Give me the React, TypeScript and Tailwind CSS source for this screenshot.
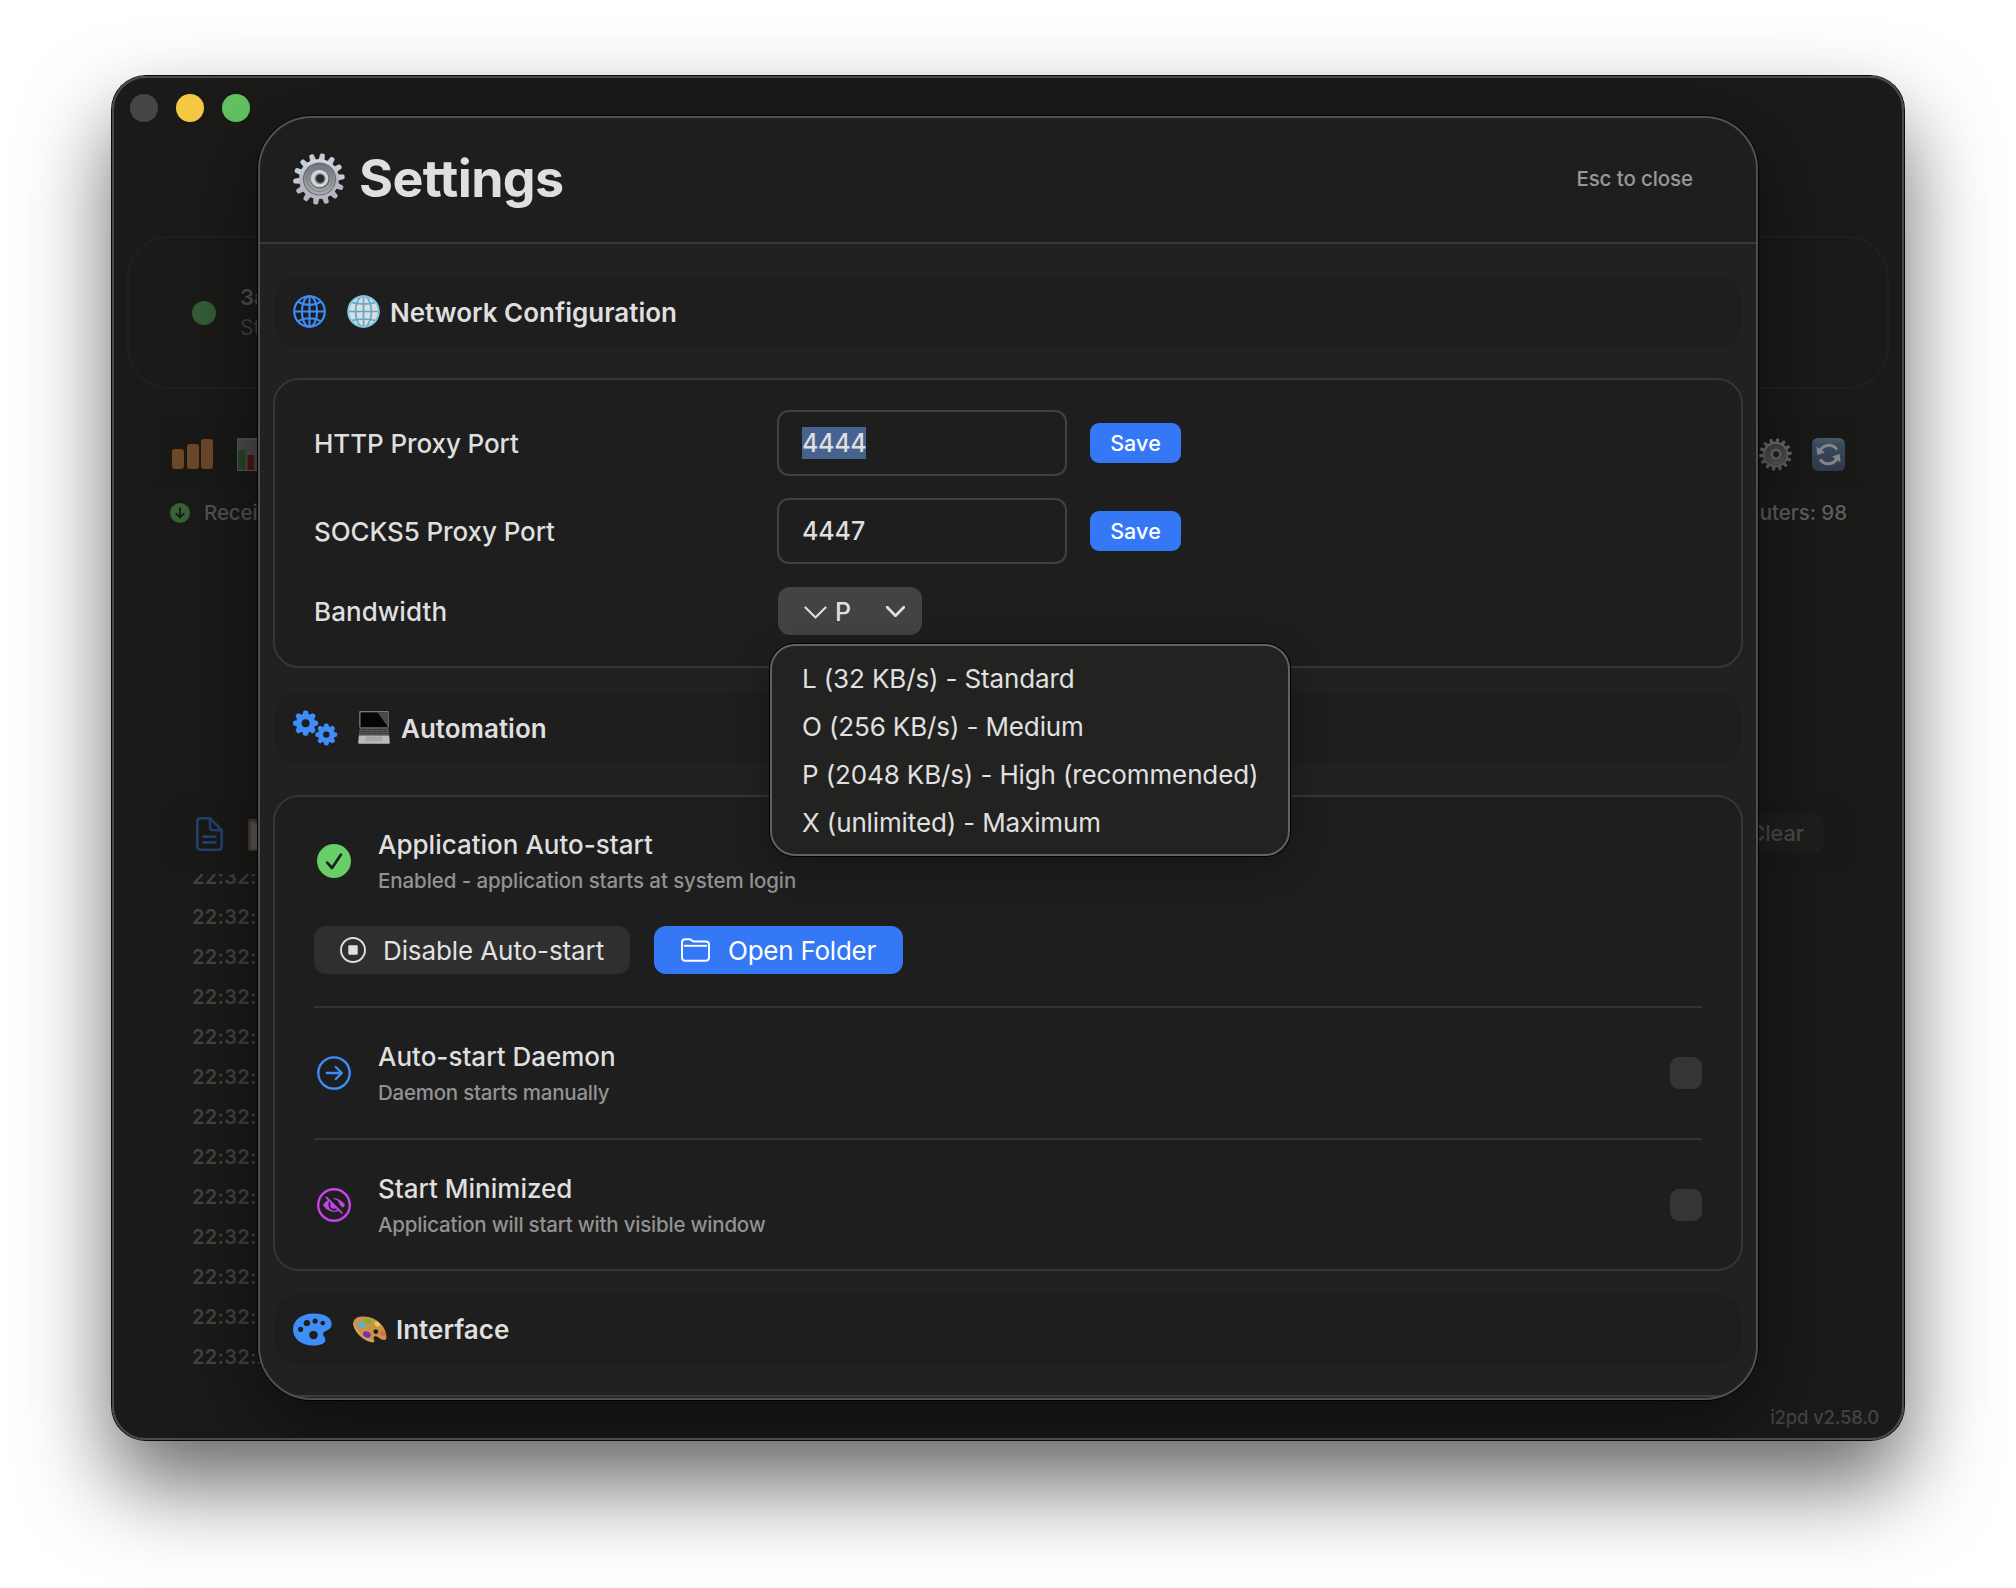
import React from "react";

type IconProps = { className?: string };

const GEAR_TEETH = Array.from({ length: 14 }, (_, i) => (i * 360) / 14 + 8);
const LOG_ROWS = Array.from({ length: 13 }, (_, i) => i);

function SilverGear({ className }: IconProps) {
  return (
    <svg viewBox="0 0 52 52" className={className}>
      <defs>
        <linearGradient id="gearMetal" x1="0" y1="0" x2="0" y2="1">
          <stop offset="0" stopColor="#d3dee6" />
          <stop offset="0.5" stopColor="#b3b6bc" />
          <stop offset="1" stopColor="#b9b6c2" />
        </linearGradient>
        <linearGradient id="gearDish" x1="0" y1="0" x2="0" y2="1">
          <stop offset="0" stopColor="#6e7276" />
          <stop offset="1" stopColor="#a9acb1" />
        </linearGradient>
      </defs>
      {GEAR_TEETH.map((a) => (
        <path
          key={a}
          d="M22.8 9 L23.6 1.6 Q23.8 0.4 25 0.3 H27 Q28.2 0.4 28.4 1.6 L29.2 9Z"
          fill={a > 110 && a < 250 ? "#b7b4be" : "#c3cdd5"}
          transform={`rotate(${a} 26 26)`}
        />
      ))}
      <circle cx="26" cy="26" r="20" fill="url(#gearMetal)" />
      <circle cx="26.5" cy="26" r="16.6" fill="#686c70" />
      <circle cx="26.5" cy="26" r="15.6" fill="url(#gearDish)" />
      <circle cx="26.5" cy="26" r="12.6" fill="none" stroke="#7d8186" strokeWidth="1" />
      <circle cx="27" cy="26" r="9.6" fill="#5f6266" />
      <circle cx="26.6" cy="25.5" r="8.8" fill="#d0d5db" />
      <circle cx="27" cy="25.6" r="5.4" fill="#7c8187" />
      <circle cx="27.2" cy="25.6" r="4.2" fill="#2c2a27" />
    </svg>
  );
}

function GlobeLine({ className }: IconProps) {
  return (
    <svg viewBox="0 0 33 33" className={className} fill="none" stroke="#3f8ef8" strokeWidth="2.1">
      <circle cx="16.5" cy="16.5" r="15.3" />
      <ellipse cx="16.5" cy="16.5" rx="7.6" ry="15.3" />
      <path d="M16.5 1.2V31.8M1.2 16.5H31.8M5 6.6Q10 9.8 16.5 9.8T28 6.6M5 26.4Q10 23.2 16.5 23.2T28 26.4" />
    </svg>
  );
}

function GlobeColor({ className }: IconProps) {
  return (
    <svg viewBox="0 0 33 33" className={className} fill="none">
      <circle cx="16.5" cy="16.5" r="15.6" fill="#dcdddd" />
      <g stroke="#5fa9c8" strokeWidth="1.7">
        <ellipse cx="16.5" cy="16.5" rx="8" ry="15.3" />
        <path d="M16.5 1V32M1 16.5H32M4.5 7.4Q10 9 16.5 9T28.5 7.4M4.5 25.6Q10 24 16.5 24T28.5 25.6" />
      </g>
      <circle cx="16.5" cy="16.5" r="15.3" stroke="#7fc6df" strokeWidth="2" />
    </svg>
  );
}

const gearPath = (cx: number, cy: number, outer: number, body: number, hole: number) => (
  <g>
    {[0, 45, 90, 135, 180, 225, 270, 315].map((a) => (
      <rect
        key={a}
        x={cx - outer * 0.22}
        y={cy - outer}
        width={outer * 0.44}
        height={outer * 0.6}
        rx={outer * 0.19}
        fill="#3f8ef8"
        transform={`rotate(${a} ${cx} ${cy})`}
      />
    ))}
    <circle cx={cx} cy={cy} r={(body + hole) / 2} fill="none" stroke="#3f8ef8" strokeWidth={body - hole} />
  </g>
);

function TwoGears({ className }: IconProps) {
  return (
    <svg viewBox="0 0 45 36" className={className}>
      {gearPath(12.6, 13.2, 12.6, 9.8, 4)}
      {gearPath(33.3, 24.6, 11, 8.5, 3.2)}
    </svg>
  );
}

function Laptop({ className }: IconProps) {
  return (
    <svg viewBox="0 0 94 98" className={className}>
      <rect x="3" y="0" width="88" height="50" rx="3" fill="#77787a" />
      <rect x="7" y="4" width="80" height="44" fill="#060606" />
      <path d="M57 4H87V45Z" fill="#4b4b4c" />
      <path d="M5 50H89L92 73H2Z" fill="#58595b" />
      <path d="M8 55H86M7 61H87M6 67H88" stroke="#2d2d2e" strokeWidth="3" strokeDasharray="5 2" />
      <path d="M2 73H92L94 94Q94 97 91 97H3Q0 97 0 94Z" fill="#b9babb" />
      <path d="M24 76H70L73 90H21Z" fill="#a5a6a7" />
    </svg>
  );
}

function PaletteSolid({ className }: IconProps) {
  return (
    <svg viewBox="38 67 118 99" className={className}>
      <path
        fillRule="evenodd"
        fill="#3f8ef8"
        d="M101 68C132 68 155 80 155 99C155 120 132 118 129 129C128 136 137 139 136 149C135 160 119 165 99 165C62 165 38 145 38 116C38 86 66 68 101 68ZM61 108a8 8 0 1 0 .01 0ZM80 87a10 10 0 1 0 .01 0ZM105 83a8 8 0 1 0 .01 0ZM128 90a7 7 0 1 0 .01 0ZM100 120a13 13 0 1 0 .01 0Z"
      />
    </svg>
  );
}

function PaletteColor({ className }: IconProps) {
  return (
    <svg viewBox="219 80 101 80" className={className}>
      <path
        fillRule="evenodd"
        fill="#cb9349"
        d="M221 95C228 78 262 78 286 91C306 102 320 125 318 146C317 152 310 153 303 149C297 146 291 139 284 140C277 142 282 150 283 156C278 161 260 156 244 143C228 130 217 112 221 95ZM287 119a7 7 0 1 0 .01 0Z"
      />
      <path d="M221 100C222 120 245 145 280 157" fill="none" stroke="#e0b069" strokeWidth="3" />
      <ellipse cx="244" cy="106" rx="12" ry="8" fill="#52b5da" transform="rotate(30 244 106)" />
      <ellipse cx="264" cy="95" rx="9" ry="7" fill="#5fbf33" transform="rotate(30 264 95)" />
      <ellipse cx="291" cy="104" rx="9" ry="6" fill="#e9cf45" transform="rotate(40 291 104)" />
      <ellipse cx="307" cy="132" rx="9" ry="6" fill="#e0664f" transform="rotate(50 307 132)" />
      <ellipse cx="260" cy="135" rx="12" ry="9" fill="#7d2fae" transform="rotate(20 260 135)" />
    </svg>
  );
}

function CheckCircle({ className }: IconProps) {
  return (
    <svg viewBox="0 0 34 34" className={className}>
      <circle cx="17" cy="17" r="17" fill="#68ce67" />
      <path d="M10.2 18.6L15 24L24 10.6" fill="none" stroke="#1e1e1e" strokeWidth="2.7" strokeLinecap="round" strokeLinejoin="round" />
    </svg>
  );
}

function ArrowCircle({ className }: IconProps) {
  return (
    <svg viewBox="0 0 34 34" className={className} fill="none" stroke="#3f8ef8" strokeWidth="2.3" strokeLinecap="round" strokeLinejoin="round">
      <circle cx="17" cy="17" r="15.7" />
      <path d="M9.8 17H24.6M18.8 11L24.8 17L18.8 23" />
    </svg>
  );
}

function HiddenCircle({ className }: IconProps) {
  return (
    <svg viewBox="0 0 34 34" className={className} fill="none">
      <circle cx="17" cy="17" r="15.8" stroke="#c843ea" strokeWidth="2.4" />
      <path d="M6 17C9 12.4 13 10.2 17 10.2S25 12.4 28 17C25 21.6 21 23.8 17 23.8S9 21.6 6 17Z" fill="#c843ea" />
      <circle cx="17" cy="17" r="4.7" stroke="#1e1e1e" strokeWidth="1.9" fill="#c843ea" />
      <path d="M10.2 7.6L26.6 24" stroke="#1e1e1e" strokeWidth="4.6" />
      <path d="M9.4 9.4L24.8 24.8" stroke="#c843ea" strokeWidth="1.9" strokeLinecap="round" />
    </svg>
  );
}

function StopCircle({ className }: IconProps) {
  return (
    <svg viewBox="0 0 26 26" className={className}>
      <circle cx="13" cy="13" r="12" fill="none" stroke="#e0e0e0" strokeWidth="1.9" />
      <rect x="8.3" y="8.3" width="9.4" height="9.4" rx="1.2" fill="#e0e0e0" />
    </svg>
  );
}

function FolderLine({ className }: IconProps) {
  return (
    <svg viewBox="0 0 29 24" className={className} fill="none" stroke="#ffffff" strokeWidth="1.9" strokeLinejoin="round">
      <path d="M1 4.4Q1 1.2 4.2 1.2H8.2Q9.6 1.2 10.6 2.2L11.2 2.8Q12 3.5 13.2 3.5H24.8Q28 3.5 28 6.7V19.6Q28 22.8 24.8 22.8H4.2Q1 22.8 1 19.6Z" />
      <path d="M3 7.8H26" />
    </svg>
  );
}

function BarChartEmoji({ className }: IconProps) {
  return (
    <svg viewBox="0 0 33 33" className={className}>
      <rect width="33" height="33" fill="#55575a" />
      <rect x="1.5" y="1.5" width="30" height="30" fill="#4b4c4f" />
      <rect x="1.4" y="12" width="7" height="20" fill="#27481f" />
      <rect x="10.6" y="17" width="6.6" height="15" fill="#4b1815" />
      <rect x="20" y="5" width="7" height="27" fill="#1c3a5c" />
    </svg>
  );
}

function RefreshEmoji({ className }: IconProps) {
  return (
    <svg viewBox="0 0 33 33" className={className}>
      <defs>
        <linearGradient id="refreshTile" x1="0" y1="0" x2="0" y2="1">
          <stop offset="0" stopColor="#4d5b6c" />
          <stop offset="0.2" stopColor="#3a4a5d" />
          <stop offset="1" stopColor="#2f3b4b" />
        </linearGradient>
      </defs>
      <rect width="33" height="33" rx="6" fill="url(#refreshTile)" />
      <g fill="none" stroke="#85878a" strokeWidth="3">
        <path d="M7.6 14.2C9.6 6.6 20 4.6 25 11.6" />
        <path d="M25.4 18.8C23.4 26.4 13 28.4 8 21.4" />
      </g>
      <path d="M4.4 8.6L5.2 17L13 14.6Z" fill="#85878a" />
      <path d="M28.6 24.4L27.8 16L20 18.4Z" transform="rotate(0 24 20)" fill="#85878a" />
    </svg>
  );
}

function DocIcon({ className }: IconProps) {
  return (
    <svg viewBox="0 0 27 34" className={className} fill="none" stroke="#23426f" strokeWidth="2.6" strokeLinejoin="round" strokeLinecap="round">
      <path d="M4.4 1.3H14L25.6 13V29.4Q25.6 32.7 22.4 32.7H4.6Q1.3 32.7 1.3 29.4V4.4Q1.3 1.3 4.4 1.3Z" />
      <path d="M14 1.5V10.4Q14 13.2 16.8 13.2H25.4M7.4 19.6H19.4M7.4 25.4H19.4" />
    </svg>
  );
}

function ClipboardEmoji({ className }: IconProps) {
  return (
    <svg viewBox="0 0 26 32" className={className}>
      <rect width="26" height="32" rx="2" fill="#4b3b2a" />
      <rect x="2.4" y="3" width="21" height="27" fill="#5a5a59" />
      <rect x="7" y="0" width="12" height="5" rx="1.5" fill="#3b3c3d" />
    </svg>
  );
}

function ChevronDown({ className, width }: { className?: string; width: number }) {
  return (
    <svg viewBox="0 0 22 12" preserveAspectRatio="none" className={className} fill="none" stroke="#e0e0e0" strokeWidth={width} strokeLinecap="round" strokeLinejoin="round">
      <path d="M1.4 1.4L11 10.6L20.6 1.4" />
    </svg>
  );
}

function DownloadDot({ className }: IconProps) {
  return (
    <svg viewBox="0 0 20 20" className={className}>
      <circle cx="10" cy="10" r="10" fill="#376337" />
      <path d="M10 5V14.2M6.2 10.6L10 14.4L13.8 10.6" fill="none" stroke="#181817" strokeWidth="1.7" strokeLinecap="round" strokeLinejoin="round" />
    </svg>
  );
}

/* Main window content, dimmed while the settings sheet is open */
function Backdrop() {
  return (
    <div className="flex h-full flex-col">
      <div className="flex h-[160px] items-start gap-[18px] pt-[18px] pl-[18px]">
        <span className="size-7 rounded-full bg-[#464543]" />
        <span className="size-7 rounded-full bg-[#f5c944]" />
        <span className="size-7 rounded-full bg-[#62c463]" />
      </div>

      <div className="mx-[15px] flex h-[153px] items-center gap-6 rounded-[42px] border-2 border-[#20201f] pl-[63px]">
        <span className="size-6 rounded-full bg-[#355d34]" />
        <div className="flex flex-col">
          <span className="text-[22px] leading-[30px] font-semibold text-[#50504f]">Запущен</span>
          <span className="pt-px text-[21px] leading-[30px] text-[#414140]">Status</span>
        </div>
      </div>

      <div className="mx-[15px] mt-[31px] flex h-[68px] items-center rounded-[32px] bg-[#191918] pr-[44px] pl-[45px]">
        <div className="flex items-end gap-[2.5px]">
          <span className="h-5 w-3 rounded-[3px] bg-[#6d4829]" />
          <span className="h-[25px] w-3 rounded-[3px] bg-[#6d4829]" />
          <span className="h-[30px] w-3 rounded-[3px] bg-[#6d4829]" />
        </div>
        <BarChartEmoji className="ml-6 size-[33px]" />
        <div className="ml-auto flex items-center gap-5">
          <SilverGear className="size-[33px] opacity-45" />
          <RefreshEmoji className="size-[33px]" />
        </div>
      </div>

      <div className="mt-[11px] flex h-7 items-center pr-[57px] pl-[58px] text-[20.5px] font-medium">
        <DownloadDot className="size-5" />
        <span className="ml-[14px] pt-px tracking-[-0.1px] text-[#535352]">Received</span>
        <span className="ml-auto pt-px tracking-[-0.05px] text-[#5f5f5e]">Routers: 98</span>
      </div>

      <div className="mx-[42px] mt-[272px] flex h-[70px] items-center rounded-[32px] bg-[#191918] pr-[38px] pl-[42px]">
        <DocIcon className="h-[34px] w-[27px]" />
        <ClipboardEmoji className="mt-0.5 ml-[25px] h-8 w-[26px]" />
        <span className="-mt-0.5 ml-auto flex h-10 w-[112px] items-center justify-end rounded-[10px] bg-[#1e1e1d] pr-[20px] text-[21.5px] font-medium text-[#4b4b4a]">
          Clear
        </span>
      </div>

      <div className="mt-[5px] flex h-[503px] flex-col justify-end overflow-hidden pl-[80px]">
        {LOG_ROWS.map((i) => (
          <span key={i} className="h-10 shrink-0 text-[20px] leading-10 font-semibold tracking-[0.3px] text-[#444443]">
            22:32:21
          </span>
        ))}
      </div>
      <div className="mt-auto flex justify-end pr-[25px] pb-[10px] text-[18.5px] leading-[26px] font-medium tracking-[-0.18px] text-[#434342]">
        i2pd v2.58.0
      </div>
    </div>
  );
}

function SectionHeader({ children, className }: { children: React.ReactNode; className: string }) {
  return (
    <div className={`flex h-[71px] shrink-0 items-center rounded-[26px] bg-[#1e1e1e] text-[26px] leading-[34px] font-semibold text-[#dfdfdf] ${className}`}>
      {children}
    </div>
  );
}

function PortRow({ label, value, selected }: { label: string; value: string; selected?: boolean }) {
  return (
    <div className="flex h-[66px] items-center">
      <span className="w-[463px] pt-0.5 text-[26px] leading-[34px] font-medium tracking-[-0.1px]">{label}</span>
      <div className="flex h-[66px] w-[290px] items-center rounded-xl border-2 border-[#414141] pl-[23px]">
        <span className={selected ? "h-8 bg-[#466390] text-[25px] leading-8 font-medium tracking-[-0.3px]" : "h-8 text-[25px] leading-8 font-medium tracking-[-0.1px]"}>
          {value}
        </span>
      </div>
      <button className="ml-[23px] h-10 w-[91px] rounded-[9px] bg-[#3478f6] text-[21.5px] font-medium tracking-[0.1px] text-white">Save</button>
    </div>
  );
}

function TitleBlock({ title, sub, subSpacing }: { title: string; sub: string; subSpacing: string }) {
  return (
    <div className="-mb-px ml-[27px] flex flex-col gap-[5px]">
      <span className="text-[26px] leading-[34px] font-medium">{title}</span>
      <span className={`text-[20.5px] leading-7 font-medium text-[#929292] ${subSpacing}`}>{sub}</span>
    </div>
  );
}

function BandwidthMenu() {
  return (
    <div className="absolute top-[57px] left-[-8px] z-20 flex h-[212px] w-[520px] flex-col rounded-[25px] border-2 border-[#626262] bg-[#222221] pt-[9px] pl-[30px] text-[26px] leading-[48px] font-normal tracking-[-0.13px] text-[#e0e0e0] shadow-[0_0_0_1px_#000,0_10px_36px_rgba(0,0,0,0.32)]">
      <span>L (32 KB/s) - Standard</span>
      <span>O (256 KB/s) - Medium</span>
      <span>P (2048 KB/s) - High (recommended)</span>
      <span>X (unlimited) - Maximum</span>
    </div>
  );
}

function SettingsSheet() {
  return (
    <div className="absolute top-[40px] left-[146px] h-[1284px] w-[1500px] rounded-[54px] shadow-[0_0_0_1px_#000,0_24px_80px_rgba(0,0,0,0.5)]">
      <div className="flex h-full flex-col overflow-hidden rounded-[54px] bg-[#22211f] text-[#dfdfdf]">
        <div className="flex h-32 shrink-0 items-center border-b-2 border-[#3a3938] bg-[#1e1e1e] pr-[65px] pl-[35px]">
          <SilverGear className="size-[52px]" />
          <h1 className="ml-[14px] text-[52px] leading-[60px] font-bold tracking-[-0.65px]">Settings</h1>
          <span className="ml-auto text-[20.5px] font-medium tracking-[-0.1px] text-[#989898]">Esc to close</span>
        </div>

        <div className="flex min-h-0 flex-1 flex-col px-[15px] pt-8">
          <SectionHeader className="mx-px pl-[19px]">
            <GlobeLine className="size-[33px]" />
            <GlobeColor className="ml-[21px] size-[33px]" />
            <span className="mt-0.5 ml-[10px]">Network Configuration</span>
          </SectionHeader>

          <div className="mt-[31px] h-[290px] shrink-0 rounded-[26px] border-2 border-[#373636] bg-[#1e1e1e] pt-[30px] pl-[39px]">
            <PortRow label="HTTP Proxy Port" value="4444" selected />
            <div className="h-[22px]" />
            <PortRow label="SOCKS5 Proxy Port" value="4447" />
            <div className="mt-[23px] flex h-12 items-center">
              <span className="w-[464px] pt-0.5 text-[26px] leading-[34px] font-medium tracking-[0.05px]">Bandwidth</span>
              <div className="relative flex h-12 w-36 items-center rounded-xl bg-[#434343] pl-[26px] text-[25px] font-medium">
                <ChevronDown width={2} className="mt-0.5 h-[13px] w-[23px]" />
                <span className="ml-[8px] pt-0.5 leading-8">P</span>
                <ChevronDown width={3.2} className="mt-px mr-[17px] ml-auto h-[11px] w-[19px]" />
                <BandwidthMenu />
              </div>
            </div>
          </div>

          <SectionHeader className="mx-px mt-6 pl-[19px]">
            <TwoGears className="h-9 w-[45px]" />
            <Laptop className="ml-[20px] h-[33px] w-[32px]" />
            <span className="mt-0.5 ml-[11px]">Automation</span>
          </SectionHeader>

          <div className="mt-8 flex h-[476px] shrink-0 flex-col rounded-[26px] border-2 border-[#373636] bg-[#1e1e1e] pt-[31px] pr-[39px] pl-[39px]">
            <div className="flex h-[66px] items-center pl-[3px]">
              <CheckCircle className="size-[34px]" />
              <TitleBlock title="Application Auto-start" sub="Enabled - application starts at system login" subSpacing="tracking-[-0.09px]" />
            </div>
            <div className="mt-8 flex gap-6 text-[26px] leading-[34px]">
              <button className="flex h-12 w-[316px] items-center rounded-xl bg-[#2f2f2f] pl-[26px] tracking-[-0.1px] text-[#e2e2e2]">
                <StopCircle className="size-[26px]" />
                <span className="ml-[17px] pt-0.5">Disable Auto-start</span>
              </button>
              <button className="flex h-12 w-[249px] items-center rounded-xl bg-[#3478f6] pl-[27px] tracking-[-0.24px] text-white">
                <FolderLine className="h-6 w-[29px]" />
                <span className="ml-[18px] pt-0.5">Open Folder</span>
              </button>
            </div>
            <div className="mt-8 h-0.5 bg-[#343434]" />
            <div className="mt-8 flex h-[66px] items-center pl-[3px]">
              <ArrowCircle className="size-[34px]" />
              <TitleBlock title="Auto-start Daemon" sub="Daemon starts manually" subSpacing="tracking-[-0.24px]" />
              <span className="ml-auto size-8 rounded-[9px] bg-[#353535]" />
            </div>
            <div className="mt-8 h-0.5 bg-[#343434]" />
            <div className="mt-8 flex h-[66px] items-center pl-[3px]">
              <HiddenCircle className="size-[34px]" />
              <TitleBlock title="Start Minimized" sub="Application will start with visible window" subSpacing="tracking-[-0.21px]" />
              <span className="ml-auto size-8 rounded-[9px] bg-[#353535]" />
            </div>
          </div>

          <SectionHeader className="mx-px mt-[23px] pl-[19px]">
            <PaletteSolid className="h-[33px] w-[39px]" />
            <PaletteColor className="ml-[21px] h-[27px] w-[34px]" />
            <span className="ml-[9px]">Interface</span>
          </SectionHeader>

          <div className="mt-[30px] h-40 shrink-0 border-t-2 border-[#3a3a39] bg-[#1e1e1e]" />
        </div>
      </div>
      <div className="pointer-events-none absolute inset-0 z-10 rounded-[54px] border-2 border-[#505050]" />
    </div>
  );
}

export default function App() {
  return (
    <div className="h-[1588px] w-[2016px] overflow-hidden bg-white pt-[76px] pl-[112px] font-['Inter',sans-serif]">
      <div className="h-[1364px] w-[1792px] rounded-[34px] shadow-[0_0_0_1px_#0a0a0a,0_44px_88px_rgba(0,0,0,0.6)]">
        <div className="relative h-full w-full overflow-hidden rounded-[34px] bg-[#1a1a18]">
          <Backdrop />
          <SettingsSheet />
          <div className="pointer-events-none absolute inset-0 rounded-[34px] border-2 border-[#4b4b49]" />
        </div>
      </div>
    </div>
  );
}
